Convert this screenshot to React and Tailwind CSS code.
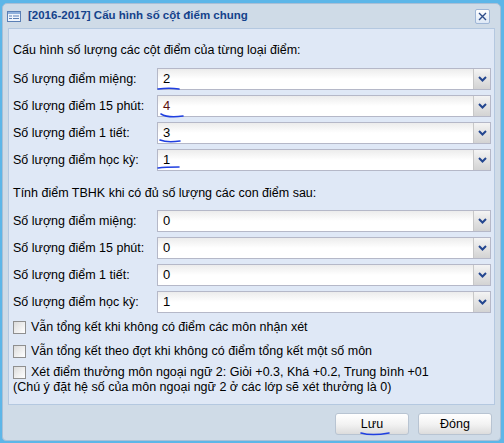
import React from "react";

const font = { fontFamily: '"Liberation Sans", Arial, sans-serif' };

function Chevron() {
  return (
    <svg width="9" height="6" viewBox="0 0 9 6">
      <path d="M1 1 L4.5 4.5 L8 1" fill="none" stroke="#23468f" strokeWidth="2" />
    </svg>
  );
}

function Combo({ value, valueClass = "text-black" }) {
  return (
    <div className="flex w-[334px] h-[22px] border border-[#b5b8c8] bg-gradient-to-b from-[#ececec] via-white to-white">
      <div className={`flex-1 flex items-center pl-[5px] text-[13px] ${valueClass}`}>{value}</div>
      <div className="w-[17px] h-full border-l border-[#c8c8c8] bg-gradient-to-b from-[#f4f4f4] to-[#d3d3d3] flex items-center justify-center">
        <Chevron />
      </div>
    </div>
  );
}

function Row({ label, value, valueClass }) {
  return (
    <div className="flex items-center h-[22px]">
      <div className="w-[144px] text-[12.5px] text-black">{label}</div>
      <Combo value={value} valueClass={valueClass} />
    </div>
  );
}

function Check() {
  return (
    <div className="w-[13px] h-[13px] border border-[#8f8f8f] bg-gradient-to-br from-[#dcdcdc] to-white shrink-0" />
  );
}

function Squiggle({ className, d }) {
  return (
    <svg className={`absolute ${className}`} width="30" height="8" viewBox="0 0 30 8">
      <path d={d} fill="none" stroke="#1f3fe0" strokeWidth="1.6" strokeLinecap="round" />
    </svg>
  );
}

export default function App() {
  return (
    <div className="w-[504px] h-[443px] bg-[#5db6e8] relative overflow-hidden" style={font}>
      <div className="absolute left-[2px] top-[3px] w-[499px] h-[438px] rounded-t-[5px] rounded-b-[4px] border border-[#a9bfd6] bg-[#cfdbe7] flex flex-col">
        {/* title bar */}
        <div className="h-[24px] flex items-center pl-[4px] pr-[10px]">
          <svg width="14" height="11" viewBox="0 0 14 11" className="mr-[7px]">
            <rect x="0.5" y="0.5" width="13" height="10" fill="#eef4fc" stroke="#5a7fb5" />
            <rect x="1" y="1" width="12" height="2" fill="#8fb0dc" />
            <rect x="2" y="4.5" width="3" height="1" fill="#5a7fb5" />
            <rect x="6" y="4.5" width="6" height="1" fill="#5a7fb5" />
            <rect x="2" y="7" width="3" height="1" fill="#5a7fb5" />
            <rect x="6" y="7" width="6" height="1" fill="#5a7fb5" />
          </svg>
          <div className="text-[11.5px] font-bold text-[#15428b]">[2016-2017] Cấu hình số cột điểm chung</div>
          <div className="ml-auto w-[15px] h-[15px] rounded-[2px] border border-[#9fb6d6] bg-gradient-to-b from-white to-[#dde8f6] flex items-center justify-center">
            <svg width="9" height="9" viewBox="0 0 9 9">
              <path d="M1 1 L8 8 M8 1 L1 8" stroke="#2f4d8a" strokeWidth="1.4" />
            </svg>
          </div>
        </div>
        {/* content */}
        <div className="mx-[5px] h-[377px] bg-[#dfe8f6] border border-[#b4c8e0] pl-[4px] flex flex-col relative">
          <div className="mt-[13px] text-[12.5px] leading-[16px] text-black">Cấu hình số lượng các cột điểm của từng loại điểm:</div>
          <div className="mt-[10px] flex flex-col gap-[5px]">
            <Row label="Số lượng điểm miệng:" value="2" />
            <Row label="Số lượng điểm 15 phút:" value="4" valueClass="text-[#5a1010]" />
            <Row label="Số lượng điểm 1 tiết:" value="3" />
            <Row label="Số lượng điểm học kỳ:" value="1" />
          </div>
          <div className="mt-[14px] text-[12.5px] leading-[16px] text-black">Tính điểm TBHK khi có đủ số lượng các con điểm sau:</div>
          <div className="mt-[9px] flex flex-col gap-[5px]">
            <Row label="Số lượng điểm miệng:" value="0" />
            <Row label="Số lượng điểm 15 phút:" value="0" />
            <Row label="Số lượng điểm 1 tiết:" value="0" />
            <Row label="Số lượng điểm học kỳ:" value="1" />
          </div>
          <div className="mt-[6px] flex items-center gap-[5px] h-[16px] text-[12.5px]">
            <Check />
            <span>Vẫn tổng kết khi không có điểm các môn nhận xét</span>
          </div>
          <div className="mt-[8px] flex items-center gap-[5px] h-[16px] text-[12.5px]">
            <Check />
            <span>Vẫn tổng kết theo đợt khi không có điểm tổng kết một số môn</span>
          </div>
          <div className="mt-[6px] text-[12.5px] leading-[15px]">
            <div className="flex items-center gap-[5px]">
              <Check />
              <span>Xét điểm thưởng môn ngoại ngữ 2: Giỏi +0.3, Khá +0.2, Trung bình +01</span>
            </div>
            <div>(Chú ý đặt hệ số của môn ngoại ngữ 2 ở các lớp sẽ xét thưởng là 0)</div>
          </div>
          <Squiggle className="left-[148px] top-[55px]" d="M1 5 C8 4, 16 4, 22 5" />
          <Squiggle className="left-[151px] top-[81px]" d="M1 4 C6 7, 16 7, 23 6" />
          <Squiggle className="left-[150px] top-[107px]" d="M1 4 C6 6, 14 6, 21 5" />
          <Squiggle className="left-[148px] top-[134px]" d="M1 5 C8 4, 16 4, 22 4" />
        </div>
        {/* footer */}
        <div className="flex-1 flex items-start justify-end gap-[9px] pr-[8px] pt-[8px] relative">
          <div className="w-[74px] h-[22px] rounded-[3px] border border-[#b8c4d2] bg-gradient-to-b from-white via-[#f3f3f3] to-[#dcdcdc] flex items-center justify-center text-[12.5px] text-black">Lưu</div>
          <div className="w-[74px] h-[22px] rounded-[3px] border border-[#b8c4d2] bg-gradient-to-b from-white via-[#f3f3f3] to-[#dcdcdc] flex items-center justify-center text-[12.5px] text-black">Đóng</div>
          <Squiggle className="left-[357px] top-[25px]" d="M1 3 C8 5, 18 5, 29 3" />
        </div>
      </div>
    </div>
  );
}
